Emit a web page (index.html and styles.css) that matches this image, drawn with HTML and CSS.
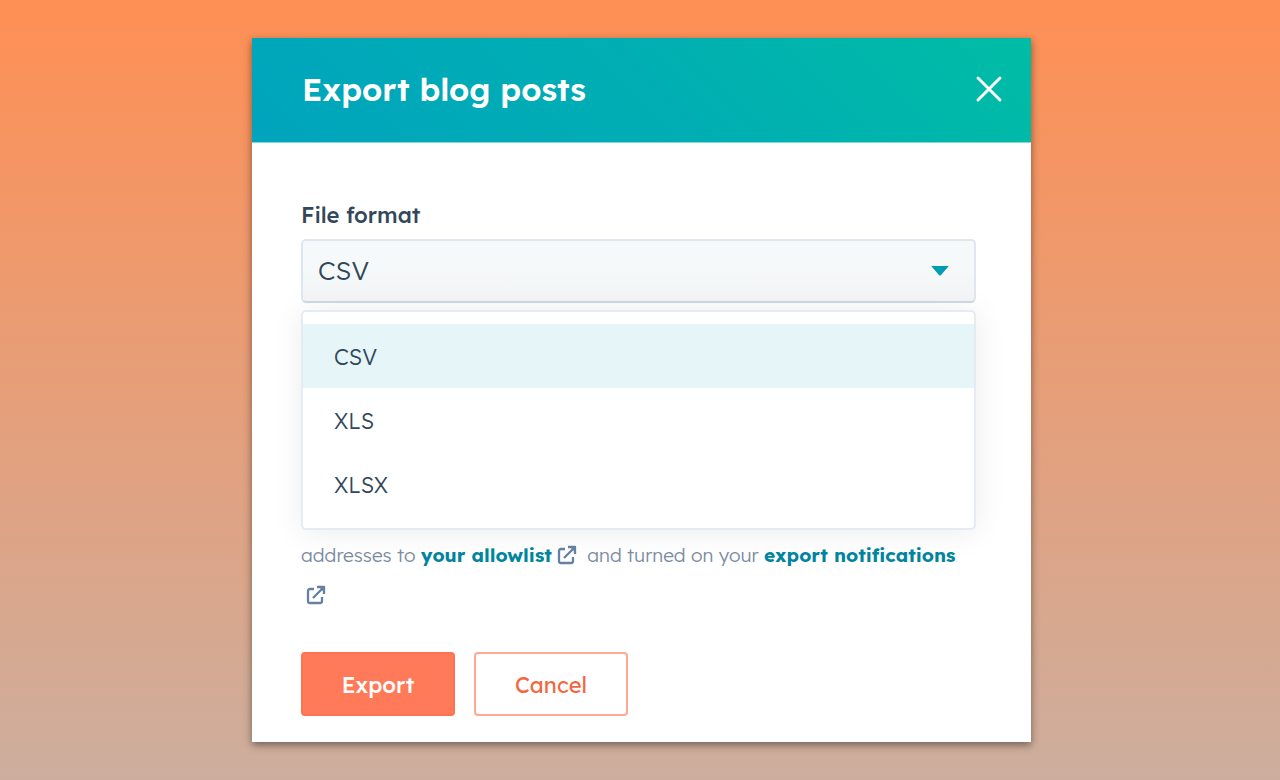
FILE: index.html
```
<!DOCTYPE html>
<html lang="en">
<head>
  <meta charset="UTF-8" />
  <meta name="viewport" content="width=device-width, initial-scale=1.0" />
  <title>Export blog posts</title>
  <link rel="stylesheet" href="styles.css">
</head>
<body>
  <main class="modal" role="dialog" aria-labelledby="modalTitle">
    <header class="modal-header">
      <h1 id="modalTitle">Export blog posts</h1>
      <button class="close" type="button" aria-label="Close">
        <svg viewBox="0 0 28 28" width="28" height="28" fill="none" stroke="currentColor" stroke-width="3" stroke-linecap="round">
          <path d="M3 3L25 25M25 3L3 25" />
        </svg>
      </button>
    </header>

    <form class="modal-body">
      <label for="format">File format</label>
      <div class="select-wrap">
        <select id="format">
          <option>CSV</option>
          <option>XLS</option>
          <option>XLSX</option>
        </select>
        <svg class="caret" viewBox="0 0 18 10" width="18" height="10" fill="currentColor">
          <path d="M1 0H17Q18 0 17 1L10 9Q9 10 8 9L1 1Q0 0 1 0Z" />
        </svg>
      </div>

      <div class="menu">
        <button class="option selected" type="button">CSV</button>
        <button class="option" type="button">XLS</button>
        <button class="option" type="button">XLSX</button>
      </div>

      <p class="note">
        addresses to <a href="#allowlist">your allowlist<svg class="external" viewBox="0 0 20 20" width="20" height="20" fill="none" stroke="currentColor" stroke-width="2.3" stroke-linejoin="round"><path d="M8 4H4Q2 4 2 6V16Q2 18 4 18H14Q16 18 16 16V12M7 13L17 3M11 2H18V9" /><path d="M13 2H18V7Z" fill="currentColor" stroke="none" /></svg></a>
        and turned on your <a href="#notifications">export notifications <svg class="external" viewBox="0 0 20 20" width="20" height="20" fill="none" stroke="currentColor" stroke-width="2.3" stroke-linejoin="round"><path d="M8 4H4Q2 4 2 6V16Q2 18 4 18H14Q16 18 16 16V12M7 13L17 3M11 2H18V9" /><path d="M13 2H18V7Z" fill="currentColor" stroke="none" /></svg></a>
      </p>

      <div class="actions">
        <button class="btn primary" type="button">Export</button>
        <button class="btn secondary" type="button">Cancel</button>
      </div>
    </form>
  </main>
</body>
</html>
```
FILE: styles.css
```
:root {
  --text: #33475b;
  --muted: #7c8ba3;
  --link: #0084a0;
  --orange: #ff7a59;
  --border: #dfe6ee;
}

* {
  box-sizing: border-box;
}

body {
  margin: 0;
  min-height: 100vh;
  padding: 38px 16px 38px 19px;
  font-family: "Lexend Deca", Lexend, Inter, sans-serif;
  color: var(--text);
  background: linear-gradient(#ff8f54, #cdae9e);
}

button,
select {
  font-family: inherit;
  cursor: pointer;
}

.modal {
  max-width: 779px;
  margin: 0 auto;
  background: #fff;
  box-shadow: 0 3px 8px rgba(0, 0, 0, 0.45);
}

.modal-header {
  display: flex;
  align-items: center;
  justify-content: space-between;
  min-height: 105px;
  padding: 0 28px 2px 50px;
  color: #fff;
  background: linear-gradient(45deg, #00a4bd, #00afb2 55%, #00bda5);
  border-bottom: 1px solid #80d8d8;
}

h1 {
  margin: 0;
  font-size: 32px;
  line-height: 40px;
  font-weight: 600;
}

.close {
  display: flex;
  padding: 0;
  border: none;
  background: none;
  color: inherit;
}

.modal-body {
  padding: 56px 55px 26px 49px;
}

label {
  display: block;
  margin-bottom: 8px;
  font-size: 22px;
  line-height: 32px;
  font-weight: 500;
}

.select-wrap {
  display: grid;
  align-items: center;
}

.select-wrap > * {
  grid-area: 1 / 1;
}

select {
  width: 100%;
  height: 64px;
  padding: 0 15px 2px;
  appearance: none;
  border: 2px solid var(--border);
  border-bottom-color: #cbd6e2;
  border-radius: 5px;
  background: linear-gradient(#f5f9fa 50%, #f1f2f3);
  color: var(--text);
  font-size: 26px;
  font-weight: 300;
}

.caret {
  justify-self: end;
  margin-right: 27px;
  color: #009cb3;
  pointer-events: none;
}

.menu {
  margin-top: 7px;
  padding: 12px 0;
  border: 2px solid #e5ebf1;
  border-radius: 5px;
  background: #fff;
  box-shadow: 0 2px 32px rgba(0, 0, 0, 0.08);
}

.option {
  display: block;
  width: 100%;
  height: 64px;
  padding: 2px 31px 0;
  border: none;
  background: none;
  color: var(--text);
  font-size: 22px;
  font-weight: 300;
  text-align: left;
}

.option.selected,
.option:hover {
  background: #e5f5f8;
}

.note {
  margin: 5px 0 37px;
  color: var(--muted);
  font-size: 19px;
  line-height: 40px;
  font-weight: 300;
}

.note a {
  color: var(--link);
  font-weight: 700;
  text-decoration: none;
}

.external {
  margin: 0 5px;
  vertical-align: -3px;
  color: #6580a0;
}

.actions {
  display: flex;
  gap: 19px;
}

.btn {
  min-width: 154px;
  height: 64px;
  padding: 2px 38px 0;
  border: 2px solid #ffa995;
  border-radius: 4px;
  font-size: 22px;
  font-weight: 500;
}

.primary {
  border-color: #ff7250;
  background: var(--orange);
  color: #fff;
}

.secondary {
  background: #fff;
  color: #f2683f;
  font-weight: 400;
}
```
